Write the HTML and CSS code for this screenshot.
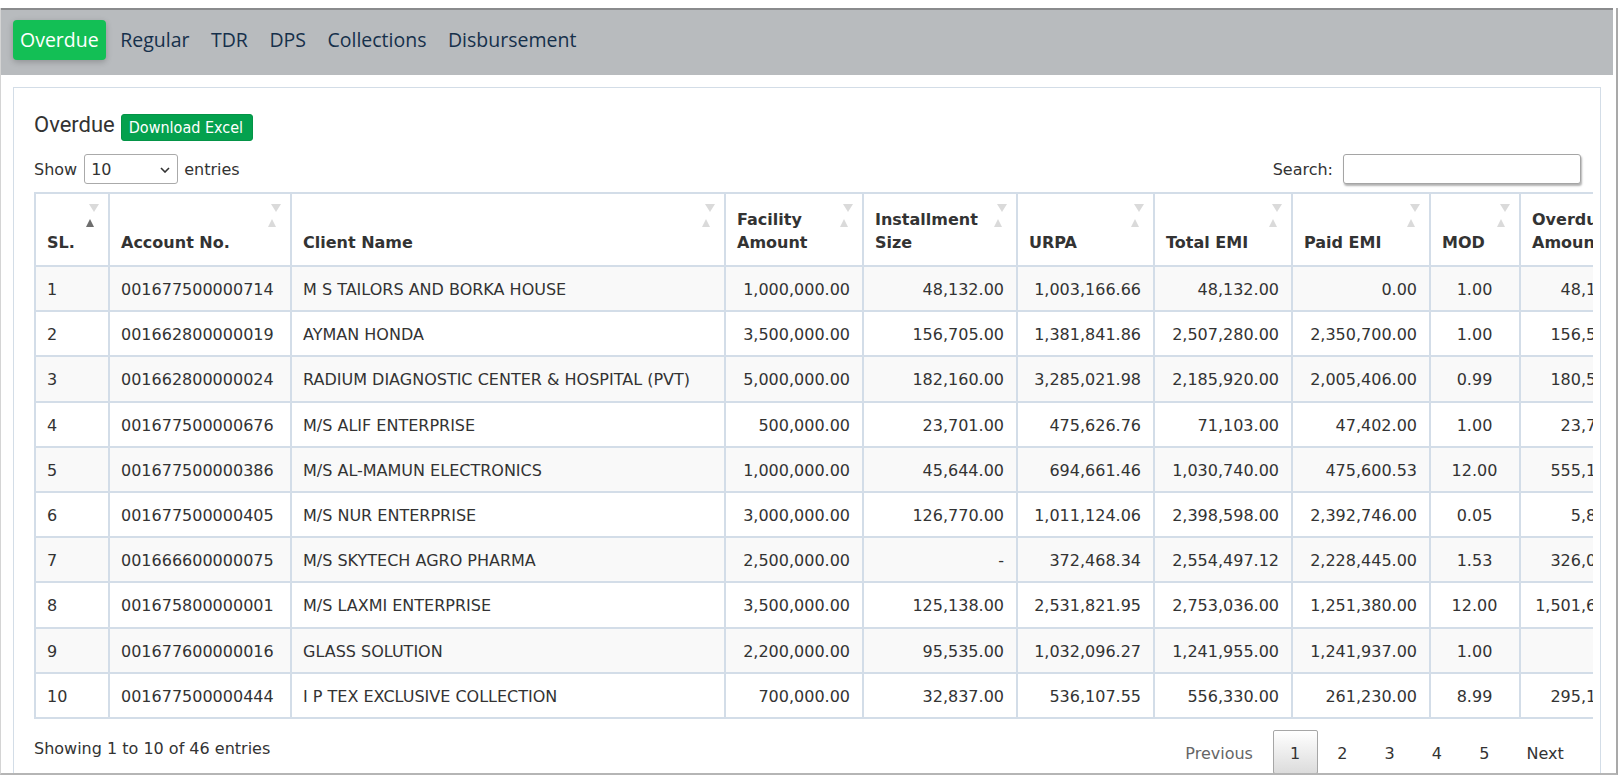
FILE: index.html
```html
<!DOCTYPE html>
<html lang="en">
<head>
<meta charset="utf-8">
<title>Overdue</title>
<link rel="stylesheet" href="styles.css">
</head>
<body>
<div class="frame">
  <nav class="navbar">
    <a class="tab active">Overdue</a>
    <a class="tab">Regular</a>
    <a class="tab">TDR</a>
    <a class="tab">DPS</a>
    <a class="tab">Collections</a>
    <a class="tab">Disbursement</a>
  </nav>

  <section class="card">
    <div class="title-row">
      <h4 class="title">Overdue</h4>
      <button class="btn-excel">Download Excel</button>
    </div>

    <div class="controls">
      <label class="length">Show
        <span class="select-wrap">
          <select class="select"><option>10</option><option>25</option><option>50</option><option>100</option></select>
          <svg class="chev" width="10" height="6" viewBox="0 0 10 6"><path d="M1 1 L5 5 L9 1" fill="none" stroke="#333" stroke-width="1.6"/></svg>
        </span>
        entries</label>
      <label class="search">Search:<input class="search-input" type="text"></label>
    </div>

    <div class="table-wrap">
      <table class="grid">
        <colgroup>
          <col class="c-sl"><col class="c-acc"><col class="c-name"><col class="c-fac"><col class="c-inst"><col class="c-urpa"><col class="c-tot"><col class="c-paid"><col class="c-mod"><col class="c-od">
        </colgroup>
        <thead>
          <tr>
            <th>SL.<i class="sort dn"></i><i class="sort up on"></i></th>
            <th>Account No.<i class="sort dn"></i><i class="sort up"></i></th>
            <th>Client Name<i class="sort dn"></i><i class="sort up"></i></th>
            <th>Facility Amount<i class="sort dn"></i><i class="sort up"></i></th>
            <th>Installment Size<i class="sort dn"></i><i class="sort up"></i></th>
            <th>URPA<i class="sort dn"></i><i class="sort up"></i></th>
            <th>Total EMI<i class="sort dn"></i><i class="sort up"></i></th>
            <th>Paid EMI<i class="sort dn"></i><i class="sort up"></i></th>
            <th>MOD<i class="sort dn"></i><i class="sort up"></i></th>
            <th>Overdue Amount<i class="sort dn"></i><i class="sort up"></i></th>
          </tr>
        </thead>
        <tbody>
          <tr><td>1</td><td>001677500000714</td><td>M S TAILORS AND BORKA HOUSE</td><td class="r">1,000,000.00</td><td class="r">48,132.00</td><td class="r">1,003,166.66</td><td class="r">48,132.00</td><td class="r">0.00</td><td class="c">1.00</td><td class="r">48,132.00</td></tr>
          <tr><td>2</td><td>001662800000019</td><td>AYMAN HONDA</td><td class="r">3,500,000.00</td><td class="r">156,705.00</td><td class="r">1,381,841.86</td><td class="r">2,507,280.00</td><td class="r">2,350,700.00</td><td class="c">1.00</td><td class="r">156,580.00</td></tr>
          <tr><td>3</td><td>001662800000024</td><td>RADIUM DIAGNOSTIC CENTER &amp; HOSPITAL (PVT)</td><td class="r">5,000,000.00</td><td class="r">182,160.00</td><td class="r">3,285,021.98</td><td class="r">2,185,920.00</td><td class="r">2,005,406.00</td><td class="c">0.99</td><td class="r">180,514.00</td></tr>
          <tr><td>4</td><td>001677500000676</td><td>M/S ALIF ENTERPRISE</td><td class="r">500,000.00</td><td class="r">23,701.00</td><td class="r">475,626.76</td><td class="r">71,103.00</td><td class="r">47,402.00</td><td class="c">1.00</td><td class="r">23,701.00</td></tr>
          <tr><td>5</td><td>001677500000386</td><td>M/S AL-MAMUN ELECTRONICS</td><td class="r">1,000,000.00</td><td class="r">45,644.00</td><td class="r">694,661.46</td><td class="r">1,030,740.00</td><td class="r">475,600.53</td><td class="c">12.00</td><td class="r">555,139.47</td></tr>
          <tr><td>6</td><td>001677500000405</td><td>M/S NUR ENTERPRISE</td><td class="r">3,000,000.00</td><td class="r">126,770.00</td><td class="r">1,011,124.06</td><td class="r">2,398,598.00</td><td class="r">2,392,746.00</td><td class="c">0.05</td><td class="r">5,852.00</td></tr>
          <tr><td>7</td><td>001666600000075</td><td>M/S SKYTECH AGRO PHARMA</td><td class="r">2,500,000.00</td><td class="r">-</td><td class="r">372,468.34</td><td class="r">2,554,497.12</td><td class="r">2,228,445.00</td><td class="c">1.53</td><td class="r">326,052.12</td></tr>
          <tr><td>8</td><td>001675800000001</td><td>M/S LAXMI ENTERPRISE</td><td class="r">3,500,000.00</td><td class="r">125,138.00</td><td class="r">2,531,821.95</td><td class="r">2,753,036.00</td><td class="r">1,251,380.00</td><td class="c">12.00</td><td class="r">1,501,656.00</td></tr>
          <tr><td>9</td><td>001677600000016</td><td>GLASS SOLUTION</td><td class="r">2,200,000.00</td><td class="r">95,535.00</td><td class="r">1,032,096.27</td><td class="r">1,241,955.00</td><td class="r">1,241,937.00</td><td class="c">1.00</td><td class="r">18.00</td></tr>
          <tr><td>10</td><td>001677500000444</td><td>I P TEX EXCLUSIVE COLLECTION</td><td class="r">700,000.00</td><td class="r">32,837.00</td><td class="r">536,107.55</td><td class="r">556,330.00</td><td class="r">261,230.00</td><td class="c">8.99</td><td class="r">295,100.00</td></tr>
        </tbody>
      </table>
    </div>

    <div class="footer">
      <div class="info">Showing 1 to 10 of 46 entries</div>
      <div class="paginate">
        <a class="pbtn disabled">Previous</a>
        <a class="pbtn current">1</a>
        <a class="pbtn">2</a>
        <a class="pbtn">3</a>
        <a class="pbtn">4</a>
        <a class="pbtn">5</a>
        <a class="pbtn">Next</a>
      </div>
    </div>
  </section>
</div>
</body>
</html>
```

FILE: styles.css
```css
html, body {
  margin: 0;
  padding: 0;
  background: #ffffff;
  overflow: hidden;
}

body {
  width: 1622px;
  height: 775px;
  font-family: "DejaVu Sans", Verdana, sans-serif;
  font-size: 16px;
  color: #333333;
}

.frame {
  box-sizing: border-box;
  margin-top: 8px;
  width: 1618px;
  height: 767px;
  border-left: 1px solid #d4d4d4;
  border-right: 2px solid #a9a9a9;
  border-bottom: 2px solid #b5b5b5;
  overflow: hidden;
}

/* ---------- top navigation ---------- */
.navbar {
  display: flex;
  gap: 7.5px;
  margin-right: 3px;
  padding: 10px 12px 15px;
  background: #b8bbbe;
  border-top: 2px solid #8a8b8d;
}

.tab {
  display: block;
  height: 40px;
  padding: 0 7px;
  line-height: 40px;
  font-family: "Open Sans", "Noto Sans", sans-serif;
  font-size: 19.5px;
  color: #16304b;
  border-radius: 4px;
  cursor: pointer;
}

.tab.active {
  background: #13bf55;
  color: #ffffff;
  box-shadow: 0 2px 6px rgba(0, 0, 0, 0.22);
}

/* ---------- card ---------- */
.card {
  margin: 12px 15px 0 12px;
  padding: 24px 19px 20px 20px;
  border: 1px solid #d3dde7;
}

.title-row {
  display: flex;
  align-items: flex-start;
  gap: 6px;
  height: 29px;
}

.title {
  margin: 0;
  font-family: Roboto, "Open Sans", sans-serif;
  font-weight: 400;
  font-size: 22px;
  line-height: 26px;
  color: #333333;
}

.btn-excel {
  margin-top: 2px;
  height: 27px;
  padding: 3px 9px 2px 7px;
  border: 1px solid #049447;
  border-radius: 3px;
  background: #04a14e;
  color: #ffffff;
  font-family: "DejaVu Sans Condensed", "DejaVu Sans", sans-serif;
  font-size: 16px;
  line-height: 20px;
}

.controls {
  display: flex;
  justify-content: space-between;
  align-items: center;
  margin-top: 13px;
  height: 30px;
}

.length, .search {
  display: flex;
  align-items: center;
  line-height: 23px;
}

.select-wrap {
  position: relative;
  display: block;
  margin: 0 6px 0 7px;
}

.select {
  display: block;
  box-sizing: border-box;
  width: 94px;
  height: 30px;
  padding: 0 0 0 6px;
  border: 1px solid #aaaaaa;
  border-radius: 3px;
  background: #ffffff;
  font-family: "DejaVu Sans", sans-serif;
  font-size: 16px;
  color: #333333;
  appearance: none;
  -webkit-appearance: none;
}

.chev {
  position: absolute;
  right: 8px;
  top: 13px;
  pointer-events: none;
}

.search-input {
  box-sizing: border-box;
  width: 238px;
  height: 30px;
  margin-left: 10px;
  border: 1px solid #a5a5a5;
  border-radius: 3px;
  box-shadow: 1px 2px 2px rgba(0, 0, 0, 0.3);
  font-family: "DejaVu Sans", sans-serif;
  font-size: 16px;
}

/* ---------- table ---------- */
.table-wrap {
  margin-top: 8px;
  margin-right: -12px;
  overflow: hidden;
}

.grid {
  table-layout: fixed;
  width: 1622px;
  border-collapse: separate;
  border-spacing: 0;
  border-left: 2px solid #d3dde8;
  border-top: 2px solid #d3dde8;
}

.c-sl { width: 74px; }
.c-acc { width: 182px; }
.c-name { width: 434px; }
.c-fac { width: 138px; }
.c-inst { width: 154px; }
.c-urpa { width: 137px; }
.c-tot { width: 138px; }
.c-paid { width: 138px; }
.c-mod { width: 90px; }
.c-od { width: 135px; }

.grid th, .grid td {
  border-right: 2px solid #d3dde8;
  border-bottom: 2px solid #d3dde8;
  line-height: 23px;
  white-space: nowrap;
  overflow: hidden;
}

.grid th {
  position: relative;
  padding: 14px 30px 11px 11px;
  text-align: left;
  vertical-align: bottom;
  font-weight: 700;
  white-space: normal;
  color: #333333;
}

.grid td {
  padding: 11px 12px 9.2px 11px;
  color: #333333;
}

.grid tbody tr:nth-child(odd) td {
  background: #f9f9f9;
}

.grid td.r { text-align: right; }
.grid td.c { text-align: center; }

.sort {
  position: absolute;
  width: 0;
  height: 0;
  border-left: 5px solid transparent;
  border-right: 5px solid transparent;
}

.sort.dn {
  top: 10px;
  right: 9px;
  border-top: 8px solid #dadada;
}

.sort.up {
  top: 25px;
  right: 14px;
  border-left-width: 4.5px;
  border-right-width: 4.5px;
  border-bottom: 8px solid #dadada;
}

.sort.up.on {
  border-bottom-color: #6e6e6e;
}

/* ---------- footer ---------- */
.footer {
  display: flex;
  justify-content: space-between;
  align-items: flex-start;
}

.info {
  padding-top: 18px;
  line-height: 23px;
}

.paginate {
  display: flex;
  padding-top: 11px;
}

.pbtn {
  display: block;
  margin-left: 2.5px;
  padding: 11px 16.3px 8px;
  border: 1px solid transparent;
  border-radius: 2px;
  line-height: 23px;
  color: #333333;
  cursor: pointer;
}

.pbtn.disabled {
  color: #666666;
}

.pbtn.current {
  border-color: #a6a6a6;
  background: linear-gradient(to bottom, #ffffff 0%, #dcdcdc 100%);
}
```
